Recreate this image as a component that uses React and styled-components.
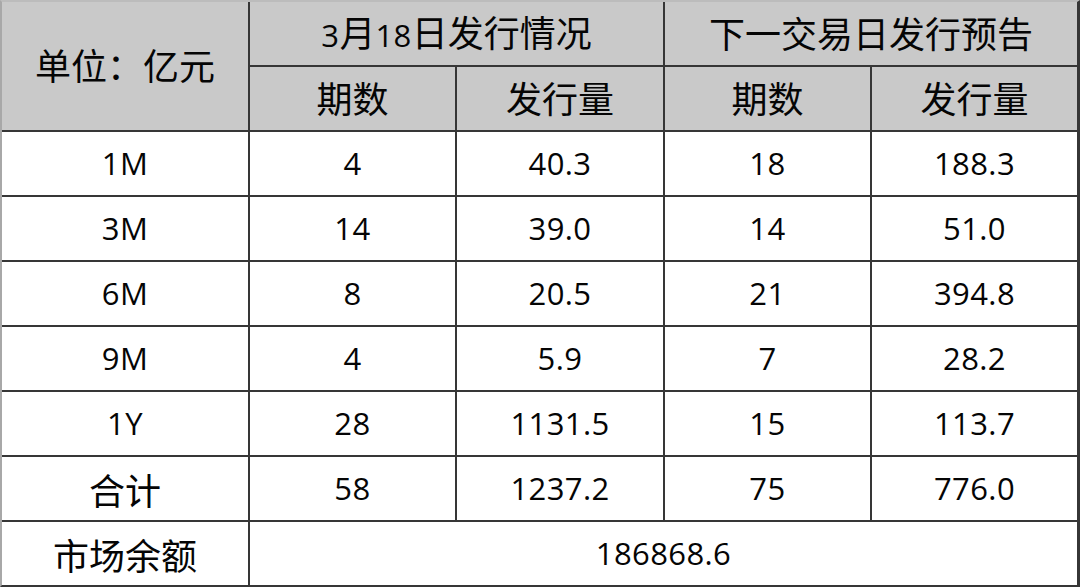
import React from "react";
import styled, { createGlobalStyle } from "styled-components";

const Global = createGlobalStyle`
  html, body { margin: 0; padding: 0; background: #ffffff; }
  body { width: 1080px; height: 587px; overflow: hidden; }
`;

const Table = styled.div`
  box-sizing: border-box;
  width: 1080px;
  height: 587px;
  display: grid;
  grid-template-columns: 246px 205px 206px 205px 205px;
  grid-template-rows: repeat(9, 63px);
  gap: 2px;
  background: #363636;
  border-top: 2px solid #bcbcbc;
  border-left: 2px solid #a8a8a8;
  border-right: 3px solid #363636;
  border-bottom: 2px solid #363636;
  font-family: "Noto Sans CJK SC", "Noto Sans", sans-serif;
  font-weight: 400;
  color: #050505;
`;

const Cell = styled.div`
  box-sizing: border-box;
  display: flex;
  align-items: center;
  justify-content: center;
  padding-bottom: ${(p) => (p.$head ? "4px" : "0")};
  background: ${(p) => (p.$head ? "#c9c9c9" : "#ffffff")};
  grid-column: ${(p) => (p.$colSpan ? `span ${p.$colSpan}` : "auto")};
  grid-row: ${(p) => (p.$rowSpan ? `span ${p.$rowSpan}` : "auto")};
  font-size: 36px;
  line-height: 1;
  white-space: nowrap;
`;

const Label = styled.span`
  display: inline-block;
  line-height: 1;
`;

const Num = styled.span`
  font-family: "Open Sans", "Noto Sans", sans-serif;
  font-size: 31px;
  letter-spacing: 0.4px;
`;

const rows = [
  ["1M", "4", "40.3", "18", "188.3"],
  ["3M", "14", "39.0", "14", "51.0"],
  ["6M", "8", "20.5", "21", "394.8"],
  ["9M", "4", "5.9", "7", "28.2"],
  ["1Y", "28", "1131.5", "15", "113.7"],
];

export default function App() {
  return (
    <>
      <Global />
      <Table>
        <Cell $head $rowSpan={2}>单位：亿元</Cell>
        <Cell $head $colSpan={2}>
          <Label>
            <Num>3</Num>月<Num>18</Num>日发行情况
          </Label>
        </Cell>
        <Cell $head $colSpan={2}>下一交易日发行预告</Cell>
        <Cell $head>期数</Cell>
        <Cell $head>发行量</Cell>
        <Cell $head>期数</Cell>
        <Cell $head>发行量</Cell>
        {rows.map((r) =>
          r.map((v, i) => (
            <Cell key={r[0] + i}>
              <Num>{v}</Num>
            </Cell>
          ))
        )}
        <Cell>合计</Cell>
        <Cell><Num>58</Num></Cell>
        <Cell><Num>1237.2</Num></Cell>
        <Cell><Num>75</Num></Cell>
        <Cell><Num>776.0</Num></Cell>
        <Cell>市场余额</Cell>
        <Cell $colSpan={4}><Num>186868.6</Num></Cell>
      </Table>
    </>
  );
}
